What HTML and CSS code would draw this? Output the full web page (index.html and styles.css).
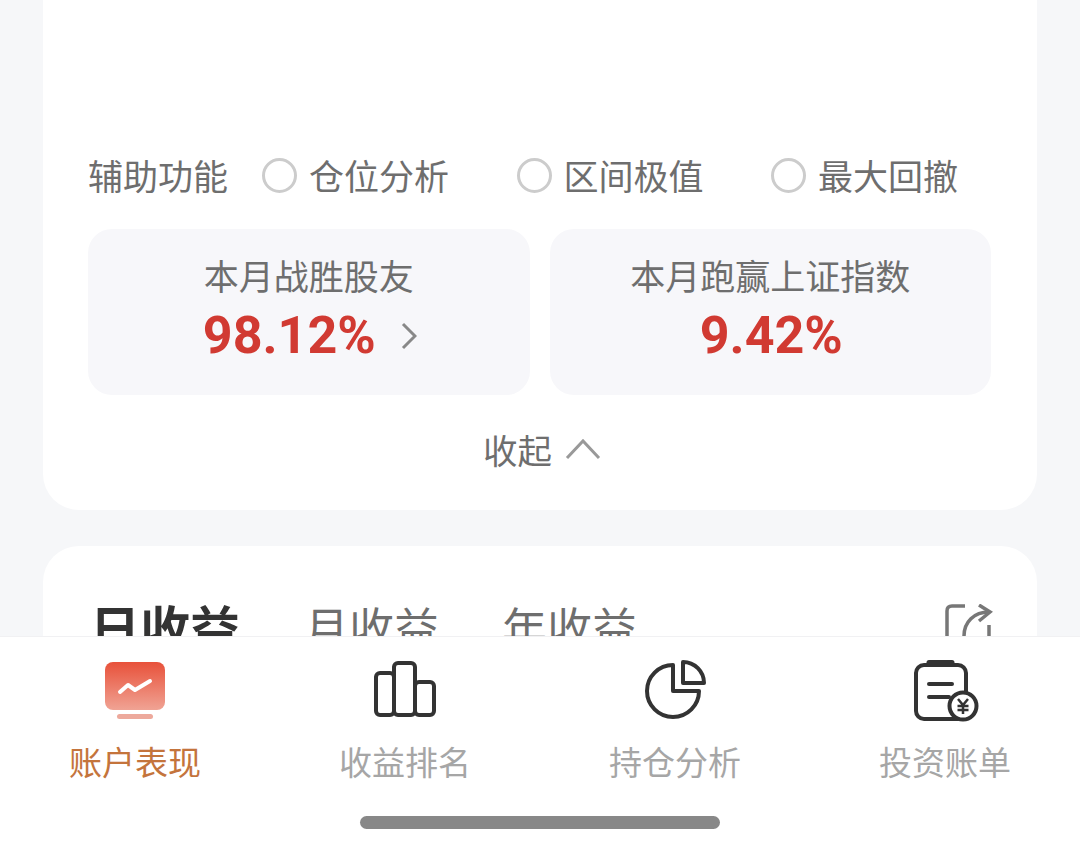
FILE: index.html
```html
<!DOCTYPE html>
<html lang="zh-CN">

<head>
	<meta charset="UTF-8">
	<meta name="viewport" content="width=device-width, initial-scale=1.0">
	<title>账户表现</title>
	<link rel="stylesheet" href="styles.css">
</head>

<body>
	<div class="page">
		<main class="content">
			<section class="card card-summary">
				<div class="assist-row">
					<span class="assist-label">辅助功能</span>
					<label class="assist-option"><span class="radio"></span>仓位分析</label>
					<label class="assist-option"><span class="radio"></span>区间极值</label>
					<label class="assist-option"><span class="radio"></span>最大回撤</label>
				</div>
				<div class="stats">
					<div class="stat">
						<div class="stat-title">本月战胜股友</div>
						<div class="stat-value">98.12%
							<svg class="stat-arrow" width="16" height="28" viewBox="0 0 16 28" fill="none">
								<path d="M2 2 L14 14 L2 26" stroke="#888" stroke-width="3" />
							</svg>
						</div>
					</div>
					<div class="stat">
						<div class="stat-title">本月跑赢上证指数</div>
						<div class="stat-value">9.42%</div>
					</div>
				</div>
				<div class="collapse">收起
					<svg width="36" height="22" viewBox="0 0 36 22" fill="none">
						<path d="M2 20 L18 3 L34 20" stroke="#999" stroke-width="3" />
					</svg>
				</div>
			</section>

			<section class="card card-income">
				<div class="income-tabs">
					<span class="income-tab active">日收益</span>
					<span class="income-tab">月收益</span>
					<span class="income-tab">年收益</span>
					<svg class="share" width="50" height="50" viewBox="0 0 50 50" fill="none" stroke="#777" stroke-width="3.5">
						<path d="M21 2 H8 Q3 2 3 7 V50" />
						<path d="M45 21 V50" />
						<path d="M20 32 C20 18 30 8 45 8" />
						<path d="M35 1 L46 8 L35 17" />
					</svg>
				</div>
			</section>
		</main>

		<nav class="tabbar">
			<div class="tab active">
				<svg width="80" height="64" viewBox="0 0 80 64" fill="none">
					<defs>
						<linearGradient id="screen" x1="0" y1="0" x2="0" y2="1">
							<stop offset="0" stop-color="#e8513a" />
							<stop offset="1" stop-color="#f0a394" />
						</linearGradient>
					</defs>
					<rect x="10" y="4" width="60" height="48" rx="8" fill="url(#screen)" />
					<rect x="22" y="56" width="36" height="5" rx="2.5" fill="#eda99c" />
					<path d="M25 34 L33 27 L40 32 L55 23" stroke="#fff" stroke-width="4" stroke-linecap="round" stroke-linejoin="round" />
				</svg>
				<span>账户表现</span>
			</div>
			<div class="tab">
				<svg width="80" height="64" viewBox="0 0 80 64" fill="none" stroke="#333" stroke-width="4" stroke-linejoin="round">
					<rect x="11" y="15" width="18" height="42" rx="4" />
					<rect x="29" y="5" width="21" height="52" rx="4" />
					<rect x="50" y="24" width="19" height="33" rx="4" />
				</svg>
				<span>收益排名</span>
			</div>
			<div class="tab">
				<svg width="80" height="64" viewBox="0 0 80 64" fill="none" stroke="#333" stroke-width="4" stroke-linejoin="round">
					<path d="M38 7 A26 26 0 1 0 64 33 H38 Z" />
					<path d="M48 4 A21 21 0 0 1 69 25 H48 Z" />
				</svg>
				<span>持仓分析</span>
			</div>
			<div class="tab">
				<svg width="80" height="64" viewBox="0 0 80 64" fill="none" stroke="#333" stroke-width="4" stroke-linecap="round">
					<rect x="11" y="7" width="50" height="54" rx="8" />
					<path d="M24 4.5 H47" stroke-width="5" />
					<path d="M24 26 H47" />
					<path d="M24 39 H44" />
					<circle cx="58" cy="48" r="13.5" fill="#fff" />
					<path d="M53 41 L58 47 L63 41 M52.5 48 H63.5 M52.5 52 H63.5 M58 47 V56" stroke-width="2.5" stroke-linecap="butt" />
				</svg>
				<span>投资账单</span>
			</div>
			<div class="home-bar"></div>
		</nav>
	</div>
</body>

</html>
```

FILE: styles.css
```css
/* Base reset */
* {
	margin: 0;
	padding: 0;
	box-sizing: border-box;
	font-family: 'Noto Sans CJK SC', 'Noto Sans', sans-serif;
}

body {
	background: #f6f7f9;
}

.page {
	display: flex;
	flex-direction: column;
	height: 850px;
	overflow: hidden;
}

.content {
	height: 636px;
	padding: 0 43px;
	overflow: hidden;
}

.card {
	background: #fff;
}

.card-summary {
	height: 510px;
	padding: 153px 46px 0 45px;
	border-radius: 0 0 36px 36px;
}

.assist-row {
	display: flex;
	align-items: center;
	height: 44px;
	font-size: 35px;
	line-height: 44px;
	color: #6e6e6e;
}

.assist-label {
	flex: none;
	width: 174px;
}

.assist-option {
	display: flex;
	flex: none;
	align-items: center;
	width: 254.5px;
}

.assist-option:last-child {
	width: auto;
}

.radio {
	width: 35px;
	height: 35px;
	margin-right: 12px;
	border: 3px solid #ccc;
	border-radius: 50%;
}

.stats {
	display: flex;
	gap: 20px;
	margin-top: 32px;
}

.stat {
	flex: 1;
	height: 166px;
	padding-top: 23px;
	text-align: center;
	background: #f7f7fa;
	border-radius: 24px;
}

.stat-title {
	font-size: 35px;
	line-height: 46px;
	color: #6e6e6e;
}

.stat-value {
	display: flex;
	align-items: center;
	justify-content: center;
	gap: 25px;
	margin-top: 5px;
	padding-left: 2px;
	font-family: Roboto, sans-serif;
	font-size: 52px;
	font-weight: 700;
	line-height: 66px;
	color: #d13a32;
}

.collapse {
	display: flex;
	align-items: center;
	justify-content: center;
	gap: 13px;
	height: 40px;
	margin-top: 34px;
	padding-left: 5px;
	font-size: 34.5px;
	color: #6e6e6e;
}

.card-income {
	height: 200px;
	margin-top: 36px;
	padding: 55px 43px 0 47px;
	border-radius: 36px 36px 0 0;
}

.income-tabs {
	display: flex;
	align-items: center;
	height: 50px;
}

.income-tab {
	margin-right: 63px;
	font-size: 45px;
	color: #6e6e6e;
}

.income-tab.active {
	margin-right: 64px;
	font-size: 50px;
	font-weight: 700;
	color: #333;
}

.share {
	margin-top: 6px;
	margin-left: auto;
	flex-shrink: 0;
}

.tabbar {
	position: relative;
	display: grid;
	grid-template-columns: repeat(4, 270px);
	height: 214px;
	background: #fff;
	border-top: 1px solid #f1f1f3;
}

.tab {
	display: flex;
	flex-direction: column;
	align-items: center;
	padding-top: 21px;
	font-size: 33px;
	color: #a6a6a6;
}

.tab span {
	margin-top: 16px;
	line-height: 46px;
}

.tab.active span {
	color: #c4743c;
}

.home-bar {
	position: absolute;
	left: 360px;
	bottom: 21px;
	width: 360px;
	height: 13px;
	background: #888;
	border-radius: 7px;
}
```
